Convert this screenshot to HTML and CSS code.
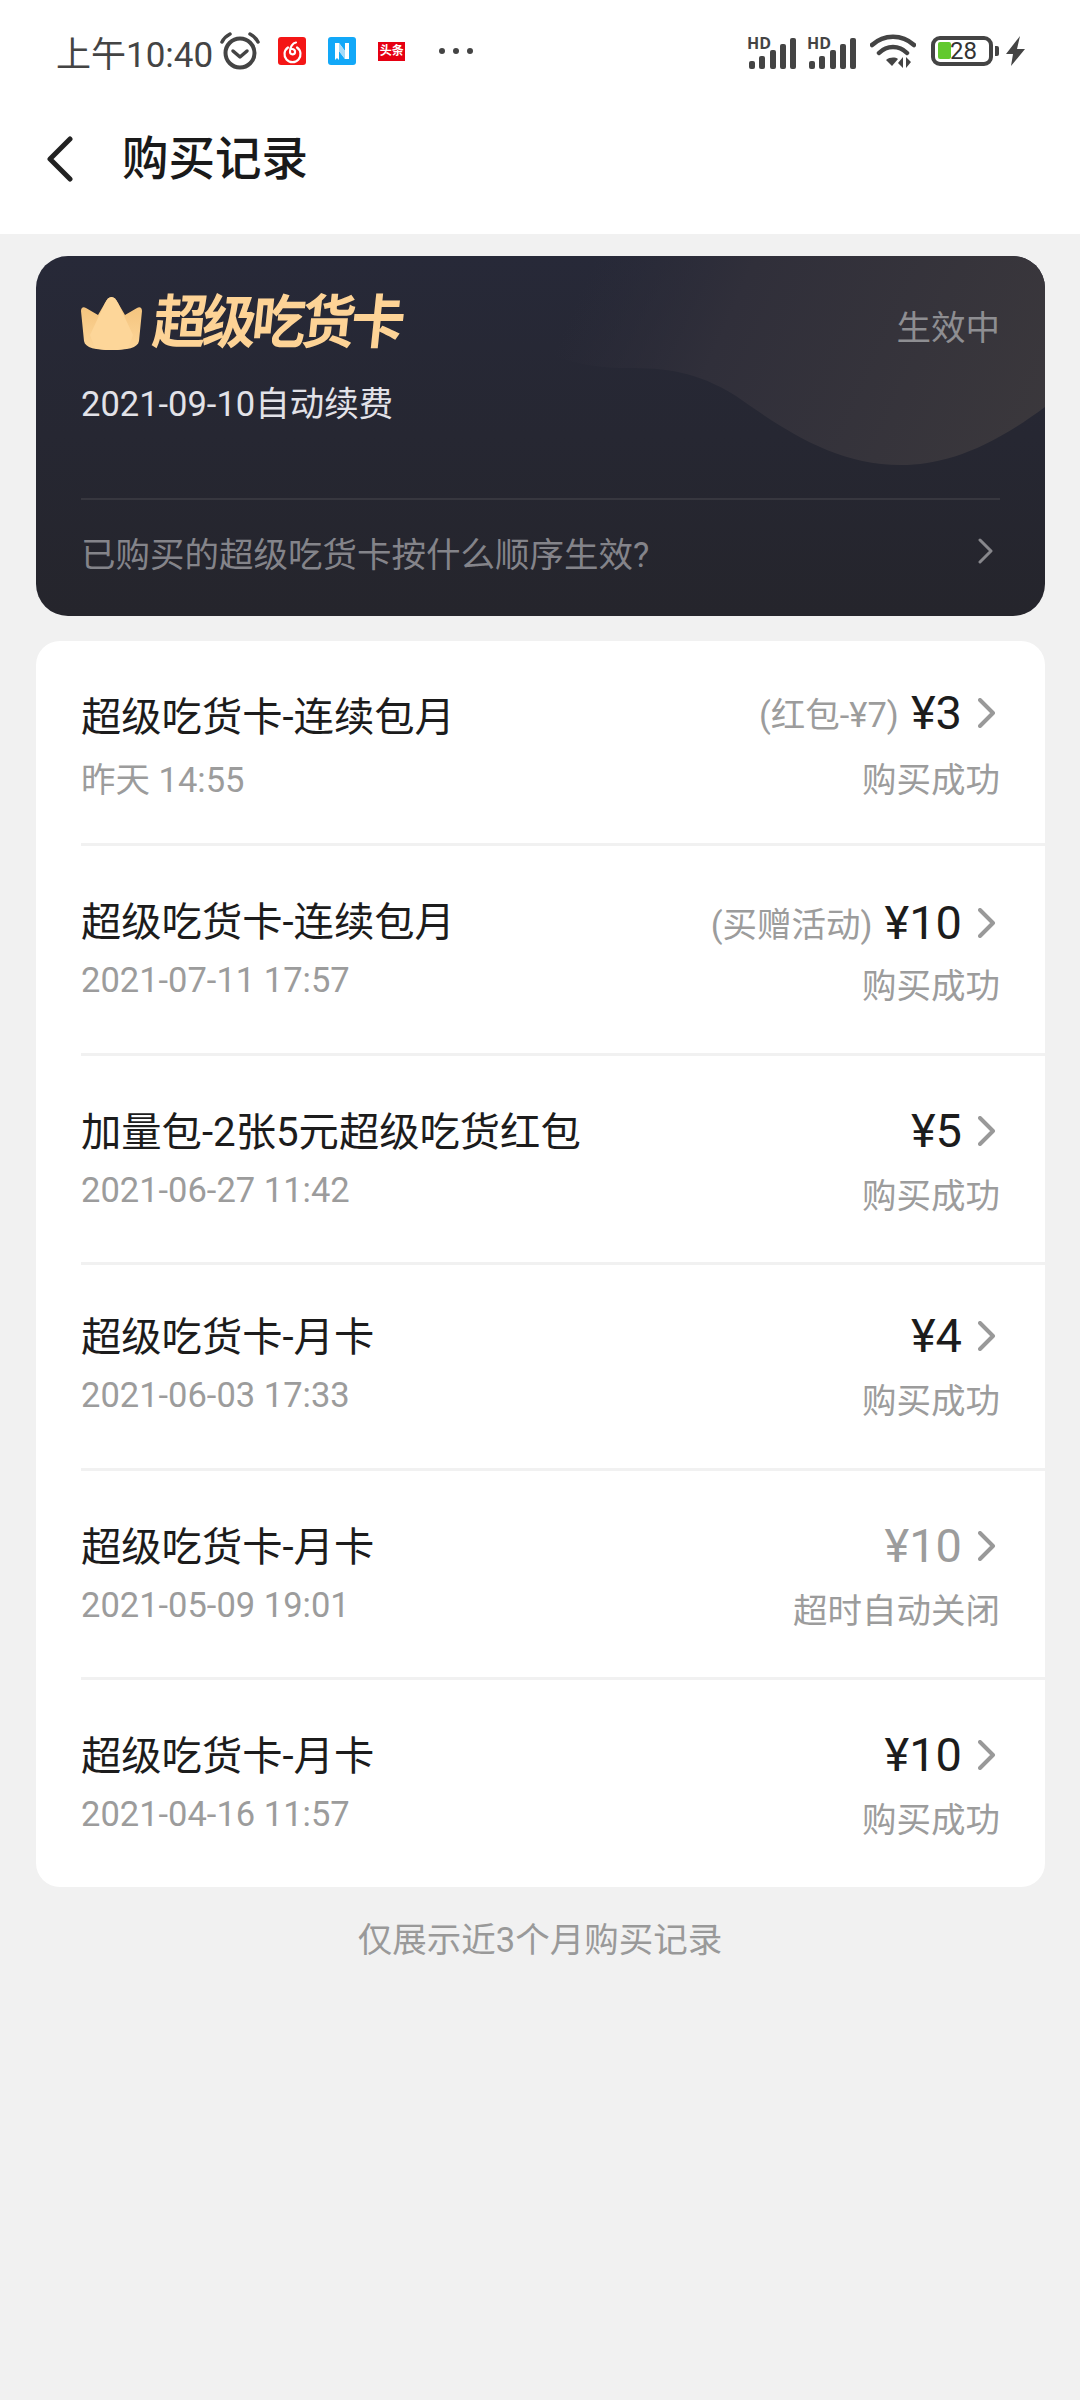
FILE: index.html
```html
<!DOCTYPE html>
<html>

<head>
    <meta charset="UTF-8">
    <title>购买记录</title>
    <link rel="stylesheet" href="styles.css">
</head>
<body>
    <div class="top">
        <div class="status">
            <span class="clock">上午10:40</span>
            <svg class="alarm" width="40" height="38" viewBox="0 0 40 38">
                <circle cx="20" cy="21" r="14.5" fill="none" stroke="#444" stroke-width="4"/>
                <path d="M13 19l7 6 7-6" fill="none" stroke="#444" stroke-width="3.5" stroke-linecap="round" stroke-linejoin="round"/>
                <path d="M2 10C4 6 6 4 10 2M38 10C36 6 34 4 30 2" fill="none" stroke="#444" stroke-width="3.5" stroke-linecap="round"/>
            </svg>
            <svg class="app-icon" width="28" height="28" viewBox="0 0 28 28">
                <rect width="28" height="28" rx="3" fill="#f41616"/>
                <path d="M10 10.500a8 8 0 1 0 9 0" fill="none" stroke="#fff" stroke-width="2.200" stroke-linecap="round"/>
                <path d="M18 5.500c-3 .5-6.500 4.500-6 9.500.3 3 4.500 3 5 .5.400-2-1-3.500-3-3.500" fill="none" stroke="#fff" stroke-width="2.200" stroke-linecap="round"/>
            </svg>
            <svg class="app-icon" width="28" height="28" viewBox="0 0 28 28">
                <rect width="28" height="28" rx="3" fill="#12a8f8"/>
                <path d="M7 6h4l6 8V6h4v16h-4l-6-8v9l-2-2-2 2z" fill="#fff"/>
                <path d="M11 6l6 8v8l-6-8z" fill="#a5daf8"/>
            </svg>
            <span class="toutiao">头条</span>
            <span class="dots"><i></i><i></i><i></i></span>
            <div class="status-right">
                <svg width="50" height="40" viewBox="0 0 50 40">
                    <text x="0" y="18" class="hd">HD</text>
                    <rect x="2" y="30" width="6" height="8" rx="2" fill="#444"/>
                    <rect x="12" y="25" width="6" height="13" rx="2" fill="#444"/>
                    <rect x="23" y="19" width="6" height="19" rx="2" fill="#444"/>
                    <rect x="33" y="13" width="6" height="25" rx="2" fill="#444"/>
                    <rect x="43" y="7" width="6" height="31" rx="2" fill="#444"/>
                </svg>
                <svg class="sim2" width="50" height="40" viewBox="0 0 50 40">
                    <text x="0" y="18" class="hd">HD</text>
                    <rect x="2" y="30" width="6" height="8" rx="2" fill="#444"/>
                    <rect x="12" y="25" width="6" height="13" rx="2" fill="#444"/>
                    <rect x="23" y="19" width="6" height="19" rx="2" fill="#444"/>
                    <rect x="33" y="13" width="6" height="25" rx="2" fill="#444"/>
                    <rect x="43" y="7" width="6" height="31" rx="2" fill="#444"/>
                </svg>
                <svg class="wifi" width="46" height="36" viewBox="0 0 46 36">
                    <path d="M2 12C14 1 32 1 44 12M9 20C17 12 29 12 37 20" fill="none" stroke="#444" stroke-width="4.500" stroke-linecap="round"/>
                    <path d="M16 27c4-3 9-3 12-1l-6 7z" fill="#444"/>
                    <path d="M33 24v11l-5-5zM36 35V24l5 5z" fill="#444"/>
                </svg>
                <div class="battery">
                    <div class="battery-body"><i></i><span>28</span></div>
                    <div class="battery-tip"></div>
                </div>
                <svg class="bolt" width="20" height="30" viewBox="0 0 20 30">
                    <path d="M14 0L0 18h7L5 30l14-17h-8z" fill="#444"/>
                </svg>
            </div>
        </div>
        <div class="nav">
            <svg width="26" height="46" viewBox="0 0 26 46">
                <path d="M23 3L3 23l20 20" fill="none" stroke="#222" stroke-width="5" stroke-linecap="round" stroke-linejoin="round"/>
            </svg>
            <h1>购买记录</h1>
        </div>
    </div>

    <div class="card">
        <svg class="wave" width="1009" height="360" viewBox="0 0 1009 360">
            <defs>
                <linearGradient id="waveFill" gradientUnits="userSpaceOnUse" x1="560" y1="0" x2="1009" y2="200">
                    <stop offset="0" stop-color="#2d2d3a" stop-opacity="0"/>
                    <stop offset="0.3" stop-color="#302f3a"/>
                    <stop offset="1" stop-color="#3b383c"/>
                </linearGradient>
            </defs>
            <path d="M400 0H1009V151C950 195 905 209 865 209C800 209 750 175 700 140C660 115 630 112 590 112C500 112 430 60 400 0z" fill="url(#waveFill)"/>
        </svg>
        <div class="card-head">
            <div>
                <div class="brand">
                    <svg width="61" height="54" viewBox="0 0 61 54">
                        <defs>
                            <linearGradient id="crownSide" x1="0" y1="0" x2="0" y2="1">
                                <stop offset="0" stop-color="#f2c078"/>
                                <stop offset="1" stop-color="#fdd699"/>
                            </linearGradient>
                        </defs>
                        <path d="M30.500 0C33 0 35 2 37 6L44 18 56 11C59 9 61 11 61 14L58 44C57 51 46 53 30.500 53S4 51 3 44L0 14C0 11 2 9 5 11L17 18 24 6C26 2 28 0 30.500 0z" fill="url(#crownSide)"/>
                        <path d="M30.500 0C33 0 35 2 37 6L52 38 47 51C42 52.500 37 53 30.500 53S19 52.500 14 51L9 38 24 6C26 2 28 0 30.500 0z" fill="#fdd699"/>
                    </svg>
                    <span class="brand-name">超级吃货卡</span>
                </div>
                <div class="renew">2021-09-10自动续费</div>
            </div>
            <div class="active">生效中</div>
        </div>
        <div class="card-foot">
            <span>已购买的超级吃货卡按什么顺序生效?</span>
            <svg width="16" height="26" viewBox="0 0 16 26">
                <path d="M2 2l11 11L2 24" fill="none" stroke="#87878c" stroke-width="3" stroke-linecap="round" stroke-linejoin="round"/>
            </svg>
        </div>
    </div>

    <div class="list">
        <div class="row row-first">
            <div class="left">
                <div class="name">超级吃货卡-连续包月</div>
                <div class="date">昨天 14:55</div>
            </div>
            <div class="right">
                <div class="price-line">
                    <span class="note">(红包-¥7)</span>
                    <span class="price">¥3</span>
                    <svg class="arrow" width="18" height="30" viewBox="0 0 18 30"><path d="M2 2l13 13L2 28"/></svg>
                </div>
                <div class="state">购买成功</div>
            </div>
        </div>
        <div class="row row-tall">
            <div class="left">
                <div class="name">超级吃货卡-连续包月</div>
                <div class="date">2021-07-11 17:57</div>
            </div>
            <div class="right">
                <div class="price-line">
                    <span class="note">(买赠活动)</span>
                    <span class="price">¥10</span>
                    <svg class="arrow" width="18" height="30" viewBox="0 0 18 30"><path d="M2 2l13 13L2 28"/></svg>
                </div>
                <div class="state">购买成功</div>
            </div>
        </div>
        <div class="row">
            <div class="left">
                <div class="name">加量包-2张5元超级吃货红包</div>
                <div class="date">2021-06-27 11:42</div>
            </div>
            <div class="right">
                <div class="price-line">
                    <span class="price">¥5</span>
                    <svg class="arrow" width="18" height="30" viewBox="0 0 18 30"><path d="M2 2l13 13L2 28"/></svg>
                </div>
                <div class="state">购买成功</div>
            </div>
        </div>
        <div class="row row-short">
            <div class="left">
                <div class="name">超级吃货卡-月卡</div>
                <div class="date">2021-06-03 17:33</div>
            </div>
            <div class="right">
                <div class="price-line">
                    <span class="price">¥4</span>
                    <svg class="arrow" width="18" height="30" viewBox="0 0 18 30"><path d="M2 2l13 13L2 28"/></svg>
                </div>
                <div class="state">购买成功</div>
            </div>
        </div>
        <div class="row">
            <div class="left">
                <div class="name">超级吃货卡-月卡</div>
                <div class="date">2021-05-09 19:01</div>
            </div>
            <div class="right">
                <div class="price-line">
                    <span class="price closed">¥10</span>
                    <svg class="arrow" width="18" height="30" viewBox="0 0 18 30"><path d="M2 2l13 13L2 28"/></svg>
                </div>
                <div class="state">超时自动关闭</div>
            </div>
        </div>
        <div class="row row-last">
            <div class="left">
                <div class="name">超级吃货卡-月卡</div>
                <div class="date">2021-04-16 11:57</div>
            </div>
            <div class="right">
                <div class="price-line">
                    <span class="price">¥10</span>
                    <svg class="arrow" width="18" height="30" viewBox="0 0 18 30"><path d="M2 2l13 13L2 28"/></svg>
                </div>
                <div class="state">购买成功</div>
            </div>
        </div>
    </div>

    <p class="hint">仅展示近3个月购买记录</p>
</body>

</html>
```

FILE: styles.css
```css
body {
    margin: 0;
    width: 1080px;
    min-height: 2400px;
    background: #f1f1f1;
    font-family: Roboto, "Noto Sans CJK SC", sans-serif;
    color: #1c1c1c;
}

.top {
    background: #fff;
    height: 234px;
}

/* status bar */
.status {
    display: flex;
    align-items: center;
    height: 100px;
    padding: 2px 54px 0 56px;
    box-sizing: border-box;
    color: #444;
}

.clock {
    font-size: 35px;
    margin-right: 7px;
}

.alarm {
    margin-right: 18px;
}

.app-icon {
    margin-right: 22px;
}

.toutiao {
    width: 27px;
    height: 19px;
    margin-right: 34px;
    background: #e60012;
    color: #fff;
    font-size: 12px;
    font-weight: 700;
    line-height: 19px;
    text-align: center;
    white-space: nowrap;
}

.dots {
    display: flex;
    gap: 8px;
}

.dots i {
    width: 6px;
    height: 6px;
    border-radius: 50%;
    background: #444;
}

.status-right {
    display: flex;
    align-items: center;
    margin-left: auto;
}

.hd {
    font-family: "Open Sans", sans-serif;
    font-size: 16px;
    font-weight: 700;
    fill: #444;
}

.sim2 {
    margin-left: 10px;
}

.wifi {
    margin-left: 13px;
}

.battery {
    display: flex;
    align-items: center;
    margin-left: 15px;
}

.battery-body {
    position: relative;
    width: 62px;
    height: 30px;
    box-sizing: border-box;
    border: 4px solid #444;
    border-radius: 9px;
    font-size: 24px;
    line-height: 22px;
    text-align: center;
    color: #333;
}

.battery-body i {
    position: absolute;
    left: 3px;
    top: 2px;
    width: 13px;
    height: 17px;
    background: #62c92e;
    border-radius: 2px;
}

.battery-body span {
    position: relative;
    margin-left: 3px;
}

.battery-tip {
    width: 4px;
    height: 10px;
    margin-left: 2px;
    background: #444;
    border-radius: 0 2px 2px 0;
}

.bolt {
    margin-left: 7px;
}

/* title bar */
.nav {
    display: flex;
    align-items: center;
    height: 134px;
    padding: 0 0 16px 47px;
    box-sizing: border-box;
}

.nav h1 {
    margin: 0 0 0 49px;
    font-size: 46.500px;
    font-weight: 500;
    line-height: 60px;
    color: #1a1a1a;
}

/* member card */
.card {
    position: relative;
    overflow: hidden;
    box-sizing: border-box;
    width: 1009px;
    height: 360px;
    margin: 22px 0 0 36px;
    padding: 0 45px;
    border-radius: 32px;
    background: linear-gradient(180deg, #272938, #25252c);
}

.wave {
    position: absolute;
    left: 0;
    top: 0;
}

.card-head {
    position: relative;
    display: flex;
    justify-content: space-between;
    height: 242px;
}

.brand {
    display: flex;
    align-items: center;
    height: 54px;
    margin-top: 41px;
}

.brand-name {
    display: inline-block;
    margin-left: 11px;
    font-size: 54px;
    font-weight: 700;
    line-height: 54px;
    letter-spacing: -4.500px;
    color: #fdd396;
    transform: skewX(-6deg) scaleY(1.08);
}

.renew {
    margin-top: 30px;
    font-size: 34.500px;
    line-height: 46px;
    color: #e2e2e8;
}

.active {
    margin-top: 49px;
    font-size: 34.500px;
    line-height: 46px;
    color: #8e8e92;
}

.card-foot {
    position: relative;
    display: flex;
    justify-content: space-between;
    height: 117px;
    border-top: 2px solid #37373f;
    font-size: 34.500px;
    line-height: 46px;
    color: #84848a;
}

.card-foot span {
    margin-top: 32px;
}

.card-foot svg {
    margin: 38px 6px 0 0;
}

/* records */
.list {
    width: 1009px;
    margin: 25px 0 0 36px;
    background: #fff;
    border-radius: 24px;
    overflow: hidden;
}

.row {
    display: flex;
    justify-content: space-between;
    box-sizing: border-box;
    height: 209px;
    margin-left: 45px;
    padding: 51px 45px 0 0;
    border-bottom: 3px solid #f1f1f1;
}

.row-first {
    height: 205px;
}

.row-tall {
    height: 210px;
}

.row-short {
    height: 206px;
    padding-top: 47px;
}

.row-last {
    height: 207px;
    border-bottom: none;
}

.name {
    font-size: 40.300px;
    line-height: 52px;
    color: #1c1c1c;
}

.date {
    margin-top: 8px;
    font-size: 34.500px;
    line-height: 46px;
    color: #9c9c9c;
}

.row-first .date {
    margin-top: 13px;
}

.right {
    display: flex;
    flex-direction: column;
    align-items: flex-end;
}

.price-line {
    display: flex;
    align-items: center;
    height: 52px;
    margin-top: -3px;
}

.row-first .price-line {
    margin-top: -6px;
}

.row-tall .price-line {
    margin-top: -1px;
}

.note {
    margin-right: 12px;
    font-size: 34.500px;
    color: #9c9c9c;
}

.price {
    font-size: 47px;
    color: #1c1c1c;
}

.price.closed {
    color: #9c9c9c;
}

.arrow {
    margin: 2px 4px 0 16px;
}

.arrow path {
    fill: none;
    stroke: #999;
    stroke-width: 4;
    stroke-linecap: round;
    stroke-linejoin: round;
}

.state {
    margin-top: 16.500px;
    font-size: 34.500px;
    line-height: 46px;
    color: #9c9c9c;
}

.row-first .state {
    margin-top: 18.500px;
}

.row-tall .state {
    margin-top: 14.500px;
}

.hint {
    margin: 30px 0 0;
    font-size: 34.500px;
    line-height: 46px;
    text-align: center;
    color: #999;
}
```
